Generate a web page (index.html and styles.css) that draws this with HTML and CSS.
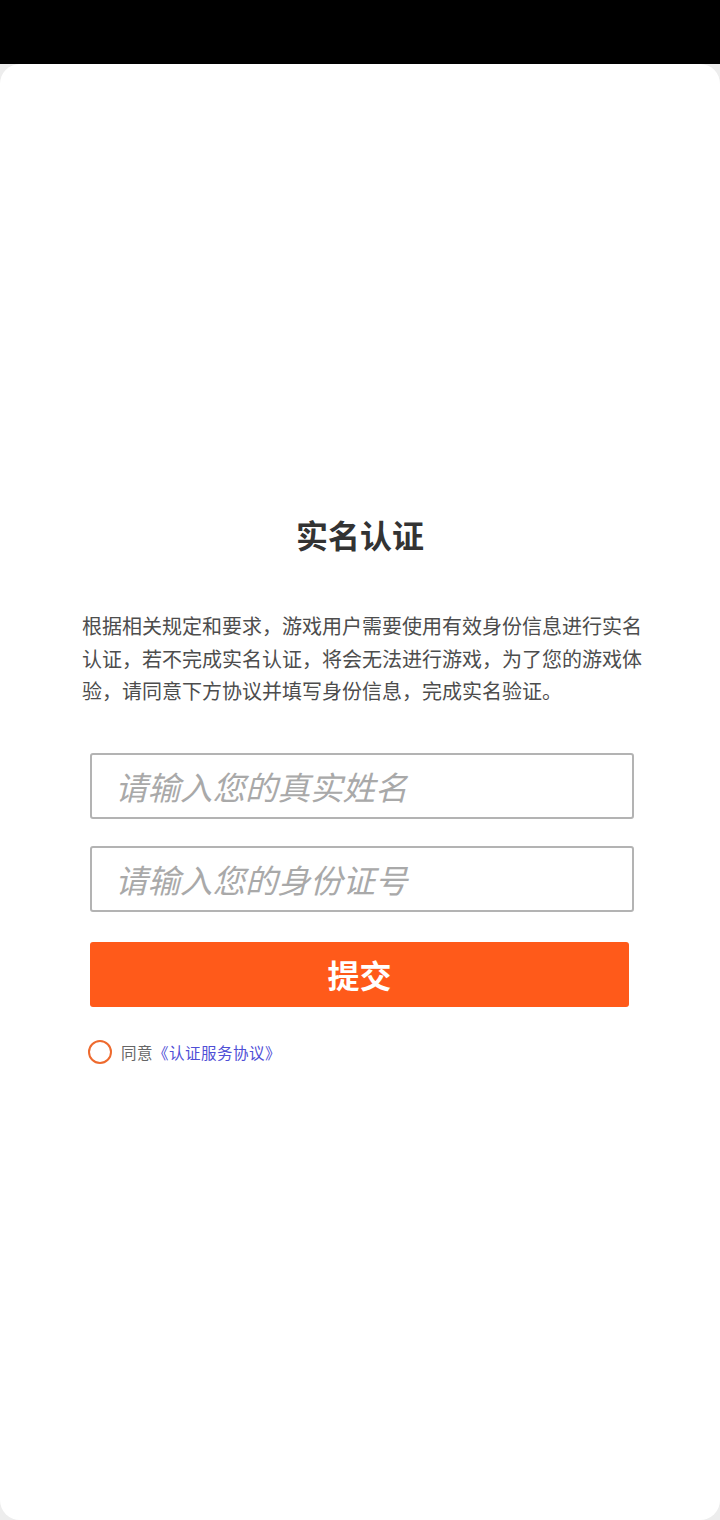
FILE: index.html
```html
<!DOCTYPE html>
<html lang="zh-CN">
<head>
<meta charset="utf-8">
<title>实名认证</title>
<link rel="stylesheet" href="styles.css">
</head>
<body>
<div class="statusbar"></div>
<main class="card">
  <h1 class="title">实名认证</h1>
  <p class="intro">根据相关规定和要求，游戏用户需要使用有效身份信息进行实名认证，若不完成实名认证，将会无法进行游戏，为了您的游戏体验，请同意下方协议并填写身份信息，完成实名验证。</p>
  <form class="form">
    <input class="field" type="text" placeholder="请输入您的真实姓名">
    <input class="field" type="text" placeholder="请输入您的身份证号">
    <button class="submit" type="button">提交</button>
    <label class="agree">
      <span class="radio"></span>
      <span class="agree-text">同意</span><a class="agree-link" href="#">《认证服务协议》</a>
    </label>
  </form>
</main>
</body>
</html>
```

FILE: styles.css
```css
html, body {
  margin: 0;
  padding: 0;
}
body {
  background: #ededed;
  font-family: "Noto Sans CJK SC", "Noto Sans", sans-serif;
  width: 720px;
  height: 1520px;
  overflow: hidden;
}
.statusbar {
  height: 64px;
  background: #000;
}
.card {
  background: #fff;
  height: 1456px;
  border-radius: 20px;
  box-sizing: border-box;
  padding-top: 448px;
  display: flex;
  flex-direction: column;
}
.title {
  margin: 0;
  text-align: center;
  font-size: 32px;
  line-height: 44px;
  font-weight: 700;
  color: #333;
}
.intro {
  margin: 54px 76px 0 82px;
  font-size: 20px;
  line-height: 32.5px;
  color: #4d4d4d;
}
.form {
  margin: 45px 0 0 90px;
  display: flex;
  flex-direction: column;
}
.field {
  box-sizing: border-box;
  width: 544px;
  height: 66px;
  margin: 0 0 27px 0;
  border: 2px solid #b3b3b3;
  border-radius: 3px;
  padding: 0 0 0 23px;
  font-family: inherit;
  font-size: 32.5px;
  color: #333;
  outline: none;
  background: #fff;
}
.field::placeholder {
  color: #a9a9a9;
  font-style: italic;
}
.submit {
  margin-top: 3px;
  width: 539px;
  height: 65px;
  border: none;
  border-radius: 3px;
  background: #ff5a1a;
  color: #fff;
  font-family: inherit;
  font-size: 32px;
  font-weight: 700;
  padding: 0;
}
.agree {
  margin-top: 33px;
  display: flex;
  align-items: center;
  height: 24px;
  font-size: 15.5px;
  letter-spacing: 0.5px;
}
.radio {
  box-sizing: border-box;
  width: 24px;
  height: 24px;
  border: 2.5px solid #ee6a2e;
  border-radius: 50%;
  margin: 0 9px 0 -2px;
}
.agree-text {
  color: #666;
}
.agree-link {
  color: #4f4fd6;
  text-decoration: none;
}
```
